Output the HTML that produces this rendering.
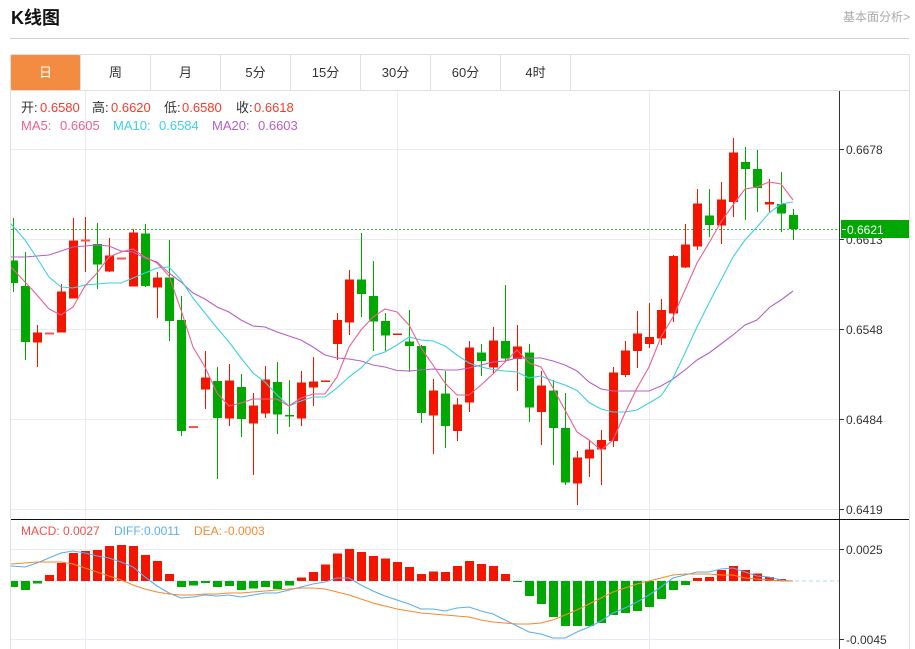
<!DOCTYPE html>
<html><head><meta charset="utf-8"><title>K线图</title>
<style>
html,body{margin:0;padding:0;background:#fff;width:915px;height:649px;overflow:hidden}
svg{display:block}
text{font-family:"Liberation Sans","Noto Sans CJK SC",sans-serif}
</style></head><body>
<svg width="915" height="649" viewBox="0 0 915 649" xmlns="http://www.w3.org/2000/svg">
<text x="11" y="24" font-size="18" font-weight="bold" fill="#111">K线图</text>
<text x="910" y="21" font-size="12" fill="#aaa" text-anchor="end">基本面分析&gt;</text>
<path d="M10 38.5H909" stroke="#d2d2d2" fill="none"/>
<path d="M10.5 54.5H909.5V649M10.5 54.5V649M11 90.5H909" stroke="#e0e0e0" fill="none"/>
<rect x="11" y="55" width="69" height="35" fill="#f38b40" rx="1"/>
<path d="M80.5 55V90M150.5 55V90M220.5 55V90M290.5 55V90M360.5 55V90M430.5 55V90M500.5 55V90M570.5 55V90" stroke="#e0e0e0" fill="none"/>
<g font-size="13" text-anchor="middle" fill="#333">
<text x="45.5" y="77" fill="#fff">日</text><text x="115.5" y="77">周</text><text x="185.5" y="77">月</text><text x="255.5" y="77">5分</text><text x="325.5" y="77">15分</text><text x="395.5" y="77">30分</text><text x="465.5" y="77">60分</text><text x="535.5" y="77">4时</text>
</g>

<path d="M11 149.5H839M11 239.5H839M11 329.5H839M11 419.5H839M11 509.5H839M11 549.5H839M11 639.5H839M85.5 91V649M397.5 91V649M649.5 91V649" stroke="#e6ecf2" fill="none"/>

<path d="M11 229.5H839" stroke="#3cb43c" stroke-dasharray="2 2" fill="none"/>
<path d="M11 581H840" stroke="#a8dcea" stroke-dasharray="4 3" fill="none"/>

<!-- red wicks -->
<path stroke="#f21500" fill="none" d="M37.5 325V367M61.5 284V332M73.5 218V298M85.5 217V272M109.5 238V272M133.5 229V286M157.5 272V318M205.5 351V409M229.5 364V426M253.5 393V475M265.5 366V418M301.5 371V426M313.5 357V406M337.5 313V360M349.5 270V335M433.5 379V454M457.5 398V441M469.5 341V412M493.5 327V373M517.5 325V391M541.5 371V445M577.5 451V505M589.5 440V477M601.5 430V485M613.5 367V447M625.5 341V377M637.5 311V368M649.5 303V348M661.5 299V345M673.5 255V322M685.5 224V268M697.5 189V250M721.5 182V244M733.5 138V217M769.5 179V213"/>
<!-- green wicks -->
<path stroke="#02a802" fill="none" d="M13.5 218V292M25.5 252V360M97.5 223V289M145.5 224V287M169.5 240V341M181.5 296V436M217.5 367V479M241.5 374V437M277.5 362V434M289.5 380V427M361.5 233V317M373.5 261V351M385.5 313V351M409.5 310V372M421.5 345V423M445.5 371V448M481.5 344V376M505.5 285V362M529.5 344V422M553.5 380V465M565.5 393V485M709.5 189V237M745.5 147V220M757.5 150V212M781.5 172V232M793.5 209V240"/>
<!-- red bodies -->
<path fill="#f21500" d="M33 332.5h9V342.5h-9zM57 291.5h9V332.5h-9zM69 240.5h9V298.5h-9zM105 255.5h9V271.5h-9zM129 232.5h9V286.5h-9zM153 277.5h9V287.5h-9zM201 377.5h9V389.5h-9zM225 380.5h9V418.5h-9zM249 405.5h9V423.5h-9zM261 379.5h9V413.5h-9zM297 382.5h9V418.5h-9zM309 381.5h9V387.5h-9zM333 320h9V344h-9zM345 279.5h9V322.5h-9zM429 390.5h9V415.5h-9zM453 404.5h9V431h-9zM465 347.5h9V402.5h-9zM489 340.5h9V367.5h-9zM513 346.5h9V359h-9zM537 385.5h9V412h-9zM573 457.5h9V483.5h-9zM585 449.5h9V458.5h-9zM597 440h9V449.5h-9zM609 372.5h9V441h-9zM621 350.5h9V375h-9zM633 333.5h9V351h-9zM645 337h9V344h-9zM657 310h9V338.5h-9zM669 256h9V313.5h-9zM681 244.5h9V267.5h-9zM693 203.5h9V246.5h-9zM717 199.5h9V225.5h-9zM729 152.5h9V202h-9zM765 202h9V204.5h-9z"/>
<path fill="#f7574a" d="M45 332.5h9v2h-9zM81 239.5h9v2h-9zM117 257.5h9v2h-9zM189 426h9v2h-9z"/>
<path fill="#f21500" d="M321 380.5h9v1.5h-9zM393 333.5h9v1.5h-9z"/>
<!-- green bodies -->
<path fill="#02a802" d="M11 260.5h7V283h-7zM21 286h9V342h-9zM93 244h9V264.5h-9zM141 233.5h9V286h-9zM165 277.5h9V321h-9zM177 320h9V431h-9zM213 381h9V418h-9zM237 387h9V419h-9zM273 382h9V414.5h-9zM285 415h9v1.5h-9zM357 279.5h9V294h-9zM369 296h9V321.5h-9zM381 321h9V335.5h-9zM405 341.5h9V346h-9zM417 346h9V413h-9zM441 393.5h9V426h-9zM477 352.5h9V361h-9zM501 341h9V358.5h-9zM525 352.5h9V407.5h-9zM549 390.5h9V428h-9zM561 428h9V482.5h-9zM705 215.5h9V225h-9zM741 162h9V169h-9zM753 169h9V188h-9zM777 204h9V213.5h-9zM789 215h9V229h-9z"/>

<!-- MA lines -->
<polyline fill="none" stroke="#b45fc8" stroke-width="1.1" points="11,257 25,257 37,256 49,255 61,251 73,247 85,246 97,245 109,246 121,251 133,252 145,258 157,262 169,273 181,282 193,293 205,299 217,307 229,312 241,320 253,326 265,327 277,332 289,336 301,340 313,347 325,355 337,358 349,359 361,361 373,365 385,367 397,370.5 409,371 421,370 433,369 445,370 457,370 469,368 481,365 493,362 505,361 517,358 529,358 541,358 553,361 565,365 577,371 589,382 601,389 613,391 625,391 637,391 649,391 661,386 673,379 685,370 697,360 709,353 721,344 733,335 745,325 757,320 770,307 781,300 793,291"/>
<polyline fill="none" stroke="#3fcfe0" stroke-width="1.1" points="11,224 25,240 37,258 49,277 61,287 73,288 85,285 97,284 109,283 121,283 133,278 145,273 157,268 169,267 181,280 193,298 205,313 217,328 229,342 241,358 253,373 265,382 277,395 289,406 301,401 313,397 325,397 337,388 349,377 361,368 373,356 385,352 397,345 409,337 421,340 433,341 445,346 457,355 469,363 481,367 493,369.5 505,371 517,372 529,378 541,376 553,381 565,385 577,390.5 589,402.5 601,409 613,412 625,412 637,410 649,403 661,396 673,378 685,353 697,327 709,303 721,280 733,257 745,240 757,227 769,213 781,204 793,202"/>
<polyline fill="none" stroke="#ee5f90" stroke-width="1.1" points="11,267 25,282 37,295 49,309 61,315 73,307 85,286 97,273 109,257 121,252 133,249 145,257 157,263 169,276 181,310 193,347 205,367 217,393 229,406 241,403 253,399 265,399 277,399 289,406 301,398 313,394 325,394 337,377 349,347 361,330 373,317 385,309 397,312 409,325 421,348 433,365 445,383 457,395 469,395 481,385 493,374 505,362 517,350 529,363 541,367 553,388 565,410 577,432 589,440 601,450 613,440 625,413 637,388 649,367 661,337 673,317 685,290 697,263 709,243 721,222 733,205 745,189 757,187 769,182 781,184 793,200"/>

<!-- MACD bars -->
<path fill="#02a802" d="M11 581h7V587h-7zM21 581h9V590h-9zM33 581h9V583.5h-9zM177 581h9V587h-9zM189 581h9V585.5h-9zM201 581h9V583h-9zM213 581h9V587h-9zM225 581h9V586h-9zM237 581h9V590h-9zM249 581h9V588.5h-9zM261 581h9V587h-9zM273 581h9V589h-9zM285 581h9V585.5h-9zM513 581h9V582h-9zM525 581h9V596h-9zM537 581h9V604h-9zM549 581h9V617h-9zM561 581h9V626h-9zM573 581h9V626h-9zM585 581h9V626h-9zM597 581h9V623h-9zM609 581h9V615h-9zM621 581h9V613h-9zM633 581h9V611h-9zM645 581h9V607h-9zM657 581h9V599h-9zM669 581h9V590h-9zM681 581h9V585h-9z"/>
<path fill="#f21500" d="M45 575h9V581h-9zM57 563h9V581h-9zM69 553h9V581h-9zM81 551h9V581h-9zM93 550h9V581h-9zM105 546h9V581h-9zM117 545h9V581h-9zM129 546h9V581h-9zM141 555h9V581h-9zM153 561h9V581h-9zM165 574h9V581h-9zM297 577.5h9V581h-9zM309 572h9V581h-9zM321 564.5h9V581h-9zM333 553.5h9V581h-9zM345 549h9V581h-9zM357 552h9V581h-9zM369 556h9V581h-9zM381 558.5h9V581h-9zM393 562h9V581h-9zM405 567h9V581h-9zM417 574h9V581h-9zM429 571.5h9V581h-9zM441 572h9V581h-9zM453 566h9V581h-9zM465 561h9V581h-9zM477 564h9V581h-9zM489 566h9V581h-9zM501 574h9V581h-9zM693 578h9V581h-9zM705 577h9V581h-9zM717 570h9V581h-9zM729 566h9V581h-9zM741 570h9V581h-9zM753 573.5h9V581h-9zM765 577h9V581h-9zM777 579h9V581h-9z"/>
<polyline fill="none" stroke="#5aaef0" stroke-width="1.1" points="11,566 25,567 37,563 49,558 61,553 73,551 85,553 97,556 109,558 121,562 133,567 145,577 157,586 169,593 181,598 193,597 205,595 217,596 229,595 241,597 253,595 265,593 277,593 289,590 301,587 313,584 325,582 337,578 349,578 361,585 373,591 385,596 397,600 409,604 421,609 433,609 445,611 457,608 469,607 481,611 493,614 505,620 517,626 529,632 541,634 553,638 565,638 577,632 589,627 601,621 613,613 625,608 637,602 649,595 661,587 673,578 685,575 697,572 709,572 721,569 733,568 745,572 757,576 769,577 781,580 793,581"/>
<polyline fill="none" stroke="#f58a30" stroke-width="1.1" points="11,564 25,563 37,562 49,562 61,562 73,564 85,568 97,572 109,576 121,580 133,585 145,589 157,592 169,594 181,595 193,595 205,594 217,594 229,593 241,593 253,592 265,591 277,590 289,589 301,588 313,588 325,589 337,592 349,595 361,599 373,603 385,606 397,609 409,611 421,613 433,614 445,615 457,616 469,617 481,620 493,622 505,623 517,624 529,624 541,623 553,620 565,615 577,610 589,604 601,598 613,592 625,588 637,584 649,581 661,578 673,575 685,574 697,574 709,574 721,575 733,575 745,578 757,579 769,580 781,581 793,581"/>

<!-- axes -->
<path d="M839.5 91V649" stroke="#333" fill="none"/>
<path d="M11 519.5H909" stroke="#111" fill="none"/>
<path d="M840 149.5H844M840 239.5H844M840 329.5H844M840 419.5H844M840 509.5H844M840 549.5H844M840 639.5H844" stroke="#333" fill="none"/>
<g font-size="12" fill="#333">
<text x="846" y="154">0.6678</text><text x="846" y="244">0.6613</text><text x="846" y="334">0.6548</text><text x="846" y="424">0.6484</text><text x="846" y="514">0.6419</text><text x="846" y="554">0.0025</text><text x="846" y="644">-0.0045</text>
</g>
<rect x="841" y="220" width="68" height="18" fill="#02a802"/>
<path d="M842 229.5H846" stroke="#fff" fill="none"/>
<text x="847" y="234" font-size="12" fill="#fff">0.6621</text>

<!-- legends -->
<g font-size="13">
<text x="21" y="112" fill="#333">开:</text><text x="40" y="112" fill="#f93a2a">0.6580</text>
<text x="92" y="112" fill="#333">高:</text><text x="111" y="112" fill="#f93a2a">0.6620</text>
<text x="164" y="112" fill="#333">低:</text><text x="182" y="112" fill="#f93a2a">0.6580</text>
<text x="236" y="112" fill="#333">收:</text><text x="254" y="112" fill="#f93a2a">0.6618</text>
<text x="21" y="130" fill="#ee5f90">MA5:</text><text x="60" y="130" fill="#ee5f90">0.6605</text>
<text x="113" y="130" fill="#3fcfe0">MA10:</text><text x="159" y="130" fill="#3fcfe0">0.6584</text>
<text x="212" y="130" fill="#b45fc8">MA20:</text><text x="258" y="130" fill="#b45fc8">0.6603</text>
</g>
<g font-size="12">
<text x="21" y="535" fill="#f4504a">MACD:</text><text x="63" y="535" fill="#f4504a">0.0027</text>
<text x="114" y="535" fill="#5aaef0">DIFF:</text><text x="144" y="535" fill="#5aaef0">0.0011</text>
<text x="194" y="535" fill="#f58a30">DEA:</text><text x="224" y="535" fill="#f58a30">-0.0003</text>
</g>
</svg>
</body></html>
